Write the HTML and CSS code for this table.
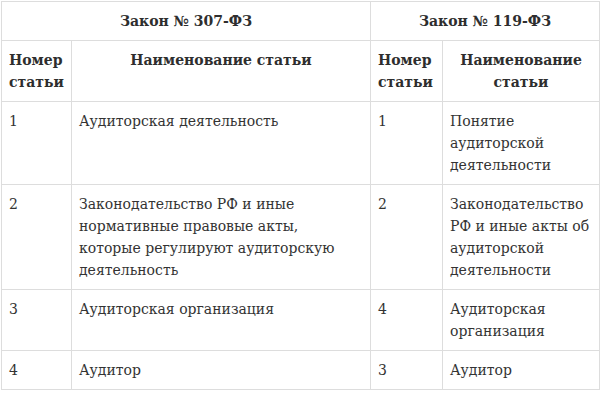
FILE: index.html
```html
<!DOCTYPE html>
<html lang="ru">
<head>
<meta charset="utf-8">
<title>Законы</title>
<link rel="stylesheet" href="styles.css">
</head>
<body>
<table class="laws">
  <colgroup>
    <col class="c-num">
    <col class="c-name">
    <col class="c-num2">
    <col class="c-name2">
  </colgroup>
  <thead>
    <tr>
      <th colspan="2" class="center">Закон № 307-ФЗ</th>
      <th colspan="2" class="center">Закон № 119-ФЗ</th>
    </tr>
    <tr>
      <th>Номер статьи</th>
      <th class="center">Наименование статьи</th>
      <th>Номер статьи</th>
      <th class="center">Наименование статьи</th>
    </tr>
  </thead>
  <tbody>
    <tr>
      <td>1</td>
      <td>Аудиторская деятельность</td>
      <td>1</td>
      <td>Понятие аудиторской деятельности</td>
    </tr>
    <tr>
      <td>2</td>
      <td>Законодательство РФ и иные нормативные правовые акты, которые регулируют аудиторскую деятельность</td>
      <td>2</td>
      <td>Законодательство РФ и иные акты об аудиторской деятельности</td>
    </tr>
    <tr>
      <td>3</td>
      <td>Аудиторская организация</td>
      <td>4</td>
      <td>Аудиторская организация</td>
    </tr>
    <tr>
      <td>4</td>
      <td>Аудитор</td>
      <td>3</td>
      <td>Аудитор</td>
    </tr>
  </tbody>
</table>
</body>
</html>
```

FILE: styles.css
```css
html, body {
  margin: 0;
  padding: 0;
  background: #fff;
}
body {
  padding: 1px 0 0 1px;
}
.laws {
  border-collapse: collapse;
  table-layout: fixed;
  width: 598px;
  font-family: "DejaVu Serif", "Liberation Serif", serif;
  font-size: 14px;
  line-height: 22px;
  color: #333;
}
.c-num { width: 70px; }
.c-name { width: 299px; }
.c-num2 { width: 72px; }
.c-name2 { width: 157px; }
.laws th,
.laws td {
  border: 1px solid #ddd;
  padding: 8px 7px 8px 7px;
  vertical-align: top;
  text-align: left;
}
.laws th {
  font-weight: bold;
  color: #2e2e2e;
}
.laws th.center {
  text-align: center;
}
```
